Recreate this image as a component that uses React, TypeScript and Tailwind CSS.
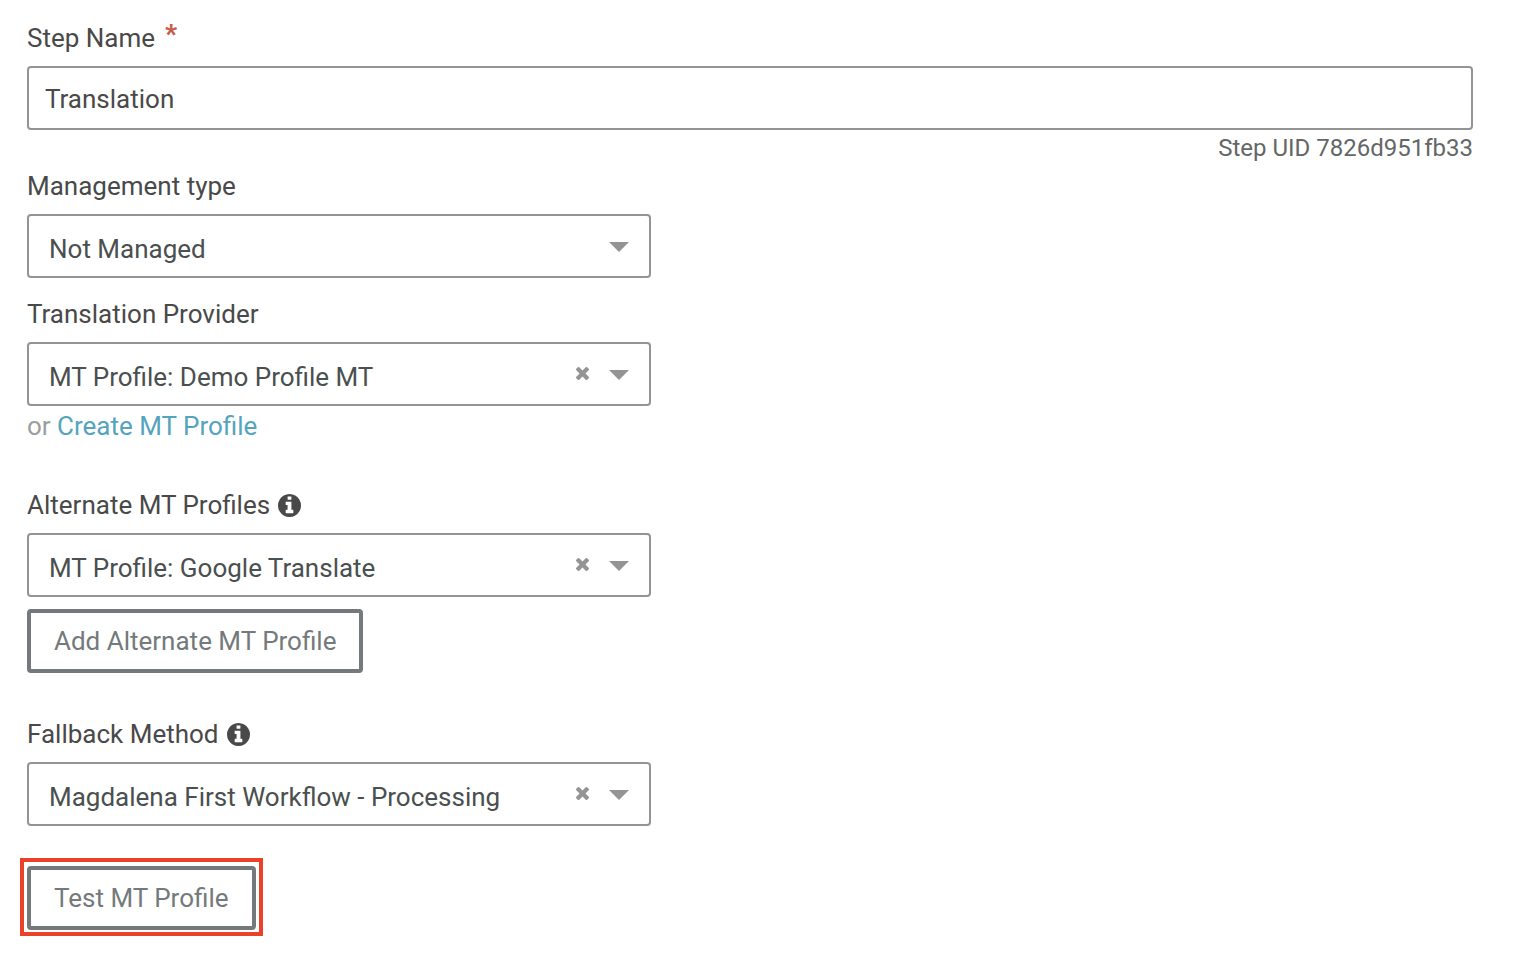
import { useState, type ReactNode } from "react";

type SelectFieldProps = {
  id: string;
  label: string;
  options: string[];
  info?: boolean;
  clearable?: boolean;
};

function InfoIcon() {
  return (
    <svg viewBox="128 128 1536 1536" className="ml-2 size-[23px]" fill="currentColor" aria-hidden="true">
      <path d="M1152 1376v-160q0-14-9-23t-23-9h-96v-512q0-14-9-23t-23-9h-320q-14 0-23 9t-9 23v160q0 14 9 23t23 9h96v320h-96q-14 0-23 9t-9 23v160q0 14 9 23t23 9h448q14 0 23-9t9-23zm-128-896v-160q0-14-9-23t-23-9h-192q-14 0-23 9t-9 23v160q0 14 9 23t23 9h192q14 0 23-9t9-23zm640 416q0 209-103 385.5t-279.5 279.5-385.5 103-385.5-103-279.5-279.5-103-385.5 103-385.5 279.5-279.5 385.5-103 385.5 103 279.5 279.5 103 385.5z" />
    </svg>
  );
}

function ClearIcon() {
  return (
    <svg viewBox="302 366 1188 1188" className="size-[13px]" fill="currentColor" aria-hidden="true">
      <path d="M1490 1322q0 40-28 68l-136 136q-28 28-68 28t-68-28l-294-294-294 294q-28 28-68 28t-68-28l-136-136q-28-28-28-68t28-68l294-294-294-294q-28-28-28-68t28-68l136-136q28-28 68-28t68 28l294 294 294-294q28-28 68-28t68 28l136 136q28 28 28 68t-28 68l-294 294 294 294q28 28 28 68z" />
    </svg>
  );
}

function FieldLabel({ htmlFor, children }: { htmlFor: string; children: ReactNode }) {
  return (
    <label htmlFor={htmlFor} className="mb-[10px] flex items-center leading-9 text-[#494949]">
      {children}
    </label>
  );
}

function SelectField({ id, label, options, info, clearable }: SelectFieldProps) {
  const [value, setValue] = useState(options[0]);
  return (
    <div className="w-full max-w-[624px]">
      <FieldLabel htmlFor={id}>
        {label}
        {info && <InfoIcon />}
      </FieldLabel>
      <div className="relative">
        <select
          id={id}
          value={value}
          onChange={(event) => setValue(event.target.value)}
          className="block h-16 w-full appearance-none rounded-[4px] border-2 border-[#949494] bg-white pt-[6px] pr-24 pl-5 text-[#4a4f4f]"
        >
          {!value && <option value=""></option>}
          {options.map((option) => (
            <option key={option}>{option}</option>
          ))}
        </select>
        <div className="pointer-events-none absolute inset-y-0 right-[22px] flex items-center gap-5 text-[#949494]">
          {clearable && (
            <button
              type="button"
              aria-label={`Clear ${label}`}
              onClick={() => setValue("")}
              className="pointer-events-auto pb-[2px]"
            >
              <ClearIcon />
            </button>
          )}
          <svg viewBox="0 0 20 10" className="mt-[2px] h-[10px] w-5" aria-hidden="true">
            <path d="M0 0h20L10 10z" fill="currentColor" />
          </svg>
        </div>
      </div>
    </div>
  );
}

function OutlineButton({ children }: { children: ReactNode }) {
  return (
    <button
      type="button"
      className="block h-16 rounded-[4px] border-4 border-[#747a7b] bg-white px-[23px] text-[#747a7b]"
    >
      {children}
    </button>
  );
}

export default function App() {
  return (
    <form
      onSubmit={(event) => event.preventDefault()}
      className="bg-white pt-5 pr-[63px] pb-5 pl-[27px] font-['Roboto','Liberation_Sans',sans-serif] text-[26px]"
    >
      <FieldLabel htmlFor="step-name">
        Step Name
        <span className="ml-[10px] self-start leading-7 font-black text-[#cb5a4b]">*</span>
      </FieldLabel>
      <input
        id="step-name"
        type="text"
        required
        defaultValue="Translation"
        className="block h-16 w-full rounded-[4px] border-2 border-[#949494] bg-white px-4 pt-[2px] text-[#494949]"
      />
      <p className="text-right text-[24px] leading-9 text-[#636767]">Step UID 7826d951fb33</p>

      <div className="mt-[2px] flex flex-col gap-[18px]">
        <SelectField id="management-type" label="Management type" options={["Not Managed"]} />
        <SelectField
          id="translation-provider"
          label="Translation Provider"
          options={["MT Profile: Demo Profile MT"]}
          clearable
        />
      </div>
      <p className="leading-10 text-[#999e9e]">
        or{" "}
        <a href="#create-mt-profile" className="text-[#55a4bd]">
          Create MT Profile
        </a>
      </p>

      <div className="mt-[41px] flex flex-col items-start gap-3">
        <SelectField
          id="alternate-profiles"
          label="Alternate MT Profiles"
          options={["MT Profile: Google Translate"]}
          info
          clearable
        />
        <OutlineButton>Add Alternate MT Profile</OutlineButton>
      </div>

      <div className="mt-[43px]">
        <SelectField
          id="fallback-method"
          label="Fallback Method"
          options={["Magdalena First Workflow - Processing"]}
          info
          clearable
        />
      </div>

      <div className="mt-8 -ml-[7px] w-fit border-4 border-[#eb4128] px-[3px] pt-1 pb-[2px]">
        <OutlineButton>Test MT Profile</OutlineButton>
      </div>
    </form>
  );
}
